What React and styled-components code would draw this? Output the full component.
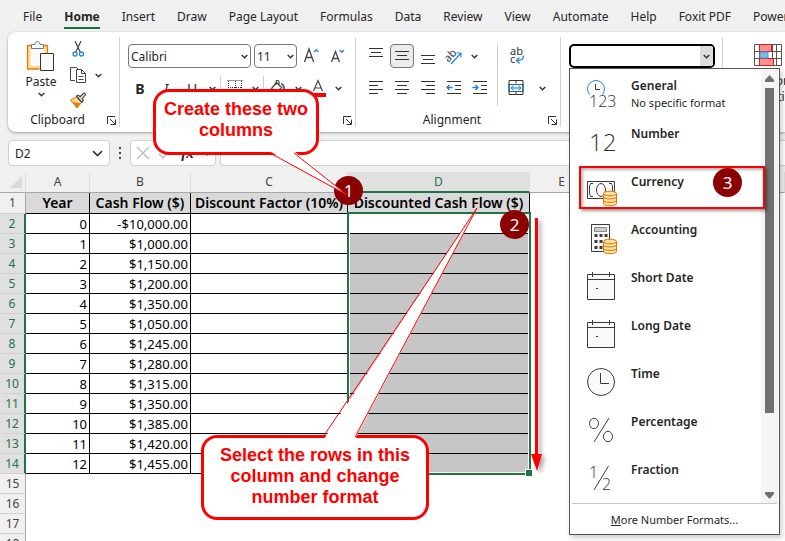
import React, { useState } from "react";
import styled, { createGlobalStyle } from "styled-components";

const GlobalStyle = createGlobalStyle`
  * {
    box-sizing: border-box;
  }
  body {
    margin: 0;
    background: #f0f0f0;
    color: #262626;
    font-family: "Noto Sans", "Open Sans", sans-serif;
    font-size: 12px;
  }
  button, input, select {
    font: inherit;
    color: inherit;
  }
`;

const Page = styled.div`
  position: relative;
  display: flex;
  flex-direction: column;
  height: 100vh;
  overflow: hidden;
`;

/* ribbon tabs */

const Tabs = styled.nav`
  display: flex;
  flex: none;
  gap: 22px;
  height: 32px;
  padding-left: 23px;
  overflow: hidden;
`;

const Tab = styled.button`
  flex: none;
  height: 29px;
  padding: 5px 0 0;
  border: 0;
  border-bottom: 2px solid ${(p) => (p.$active ? "#1b6e43" : "transparent")};
  background: none;
  font-weight: ${(p) => (p.$active ? 700 : 400)};
  white-space: nowrap;
`;

/* ribbon */

const Ribbon = styled.section`
  position: relative;
  z-index: 2;
  display: flex;
  flex: none;
  height: 100px;
  margin-left: 8px;
  padding: 5px 0;
  border-radius: 8px 0 0 8px;
  background: #fff;
  box-shadow: 0 1px 3px rgba(0, 0, 0, 0.35);
`;

const Group = styled.div`
  display: flex;
  flex: none;
  flex-direction: column;
  width: ${(p) => p.$width}px;
  border-right: 1px solid #d0d0d0;
`;

const GroupBody = styled.div`
  display: flex;
  flex: 1;
  padding: 7px 0 0 8px;
`;

const GroupFooter = styled.div`
  display: flex;
  align-items: center;
  height: 14px;
  padding-right: 3px;
  line-height: 14px;

  span {
    flex: 1;
    text-align: center;
  }
`;

const Launcher = styled.button`
  display: flex;
  padding: 0;
  border: 0;
  background: none;
`;

const Column = styled.div`
  display: flex;
  flex-direction: column;
  gap: ${(p) => p.$gap || 8}px;
`;

const Row = styled.div`
  display: flex;
  align-items: center;
  height: 24px;
  gap: 2px;
`;

const ToolButton = styled.button`
  display: flex;
  flex: none;
  align-items: center;
  justify-content: center;
  width: 24px;
  height: 24px;
  padding: 0;
  border: 1px solid ${(p) => (p.$active ? "#777" : "transparent")};
  border-radius: 4px;
  background: ${(p) => (p.$active ? "#ececec" : "none")};
  font-size: 14px;
`;

const DropButton = styled(ToolButton)`
  width: 12px;
`;

const Divider = styled.div`
  width: 1px;
  height: ${(p) => p.$height}px;
  background: #d0d0d0;
`;

const PasteButton = styled.button`
  display: flex;
  flex-direction: column;
  align-items: center;
  width: 50px;
  height: 70px;
  margin-top: -3px;
  padding: 0;
  border: 0;
  background: none;
  line-height: 18px;
`;

const ClipboardTools = styled(Column)`
  margin-top: -7px;
`;

const SelectBox = styled.label`
  position: relative;
  display: flex;
  flex: none;
  align-items: center;
  width: ${(p) => p.$width}px;
  height: 24px;
  margin-right: 1px;

  select {
    width: 100%;
    height: 100%;
    padding: 0 2px;
    border: 1px solid #777;
    border-radius: 4px;
    background: #fff;
    appearance: none;
  }

  svg {
    position: absolute;
    right: 3px;
    pointer-events: none;
  }
`;

const FormatBox = styled.div`
  position: relative;
  display: flex;
  width: 146px;
  height: 24px;
  border: 2px solid #000;
  border-radius: 5px;

  input {
    flex: 1;
    min-width: 0;
    padding: 0 4px;
    border: 0;
    background: none;
    outline: 0;
  }
`;

const FormatArrow = styled.button`
  display: flex;
  align-items: center;
  justify-content: center;
  width: 13px;
  padding: 0;
  border: 0;
  border-radius: 0 2px 2px 0;
  background: #ddd;
`;

const ConditionalButton = styled.button`
  display: flex;
  flex-direction: column;
  align-items: center;
  width: 74px;
  padding: 0;
  border: 0;
  background: none;
  line-height: 16px;

  svg {
    margin-bottom: 7px;
  }
`;

/* number format menu */

const Menu = styled.div`
  position: absolute;
  top: 22px;
  left: -2px;
  width: 211px;
  border: 1px solid #555;
  background: #fff;
  box-shadow: 2px 3px 5px rgba(0, 0, 0, 0.2);
`;

const MenuBody = styled.div`
  display: flex;
  padding: 1px 1px 0 0;
`;

const MenuList = styled.ul`
  flex: 1;
  margin: 0;
  padding: 0 0 1px;
  list-style: none;
`;

const MenuItem = styled.button`
  display: flex;
  gap: 12px;
  width: 100%;
  height: 48px;
  padding: 7px 0 0 17px;
  border: 0;
  background: none;
  line-height: 17px;
  text-align: left;

  strong,
  span {
    display: block;
    font-size: 12px;
    font-weight: 600;
    white-space: nowrap;
  }

  span {
    font-size: 11px;
    font-weight: 400;
  }
`;

const FormatSvg = styled.svg`
  flex: none;
  margin-top: 2px;

  text {
    fill: #333;
    stroke: none;
    font-family: "Open Sans", "Noto Sans", sans-serif;
    font-weight: 300;
  }
`;

const ScrollTrack = styled.div`
  display: flex;
  flex-direction: column;
  align-items: center;
  width: 17px;
  padding: 5px 0 4px;
  background: #f4f4f4;
`;

const ScrollThumb = styled.div`
  width: 9px;
  height: 325px;
  margin: 5px 0 auto;
  background: #707070;
`;

const MenuFooter = styled.button`
  display: block;
  width: calc(100% - 4px);
  height: 31px;
  margin: 0 2px;
  padding: 0;
  border: 0;
  border-top: 1px solid #c8c8c8;
  background: none;
  font-size: 11px;
  text-align: center;
`;

/* formula bar */

const FormulaBar = styled.div`
  display: flex;
  flex: none;
  align-items: center;
  height: 40px;
  padding: 2px 0 0 8px;
`;

const NameBox = styled.label`
  display: flex;
  align-items: center;
  width: 102px;
  height: 26px;
  padding: 0 6px;
  border: 1px solid #d0d0d0;
  border-radius: 4px;
  background: #fff;

  input {
    flex: 1;
    min-width: 0;
    padding: 0;
    border: 0;
    background: none;
  }
`;

const FormulaTools = styled.div`
  display: flex;
  align-items: center;
  justify-content: space-between;
  width: 86px;
  height: 26px;
  padding: 0 4px;
  border: 1px solid #d0d0d0;
  border-radius: 4px;
  background: #fff;

  em {
    font: italic bold 15px "Liberation Serif", serif;
  }
`;

const FormulaInput = styled.input`
  flex: 1;
  height: 26px;
  margin-left: 4px;
  border: 1px solid #d0d0d0;
  border-right: 0;
  border-radius: 4px 0 0 4px;
  background: #fff;
`;

const Dots = styled.svg`
  flex: none;
  margin: 0 8px;
`;

/* sheet */

const Sheet = styled.main`
  position: relative;
  flex: 1;
  min-height: 0;
  background: #fff;
`;

const Grid = styled.table`
  width: 100%;
  border-spacing: 0;
  table-layout: fixed;
  font-size: 13px;
  line-height: 16px;
`;

const ColHead = styled.th`
  height: 21px;
  padding: 0;
  border-right: 1px solid #dcdcdc;
  border-bottom: ${(p) => (p.$selected ? "2px solid #217346" : "1px solid #a6a6a6")};
  background: ${(p) => (p.$selected ? "#e0e0e0" : "#f0f0f0")};
  color: ${(p) => (p.$selected ? "#217346" : "#444")};
  font-size: 12px;
  font-weight: 400;
`;

const Corner = styled(ColHead)`
  svg {
    display: block;
    margin: 0 3px 0 auto;
  }
`;

const RowHead = styled.th`
  height: ${(p) => (p.$tall ? 21 : 20)}px;
  padding: 0;
  border-right: ${(p) => (p.$selected ? "2px solid #217346" : "1px solid #a6a6a6")};
  border-bottom: 1px solid #d0d0d0;
  background: ${(p) => (p.$selected ? "#e0e0e0" : "#f0f0f0")};
  color: ${(p) => (p.$selected ? "#217346" : "#444")};
  font-size: 12px;
  font-weight: 400;
`;

const TitleCell = styled.th`
  padding: 0;
  border-right: 1px solid #000;
  border-bottom: 1px solid #000;
  background: #d9d9d9;
  color: #000;
  font-size: 14px;
  font-weight: 600;
  white-space: nowrap;
`;

const Cell = styled.td`
  padding: 0 2px 0 0;
  border-right: 1px solid #000;
  border-bottom: 1px solid #000;
  background: ${(p) => (p.$shaded ? "#c6c6c6" : "#fff")};
  color: #000;
  text-align: right;
`;

const Selection = styled.div`
  position: absolute;
  top: 40px;
  left: 347px;
  width: 184px;
  height: 263px;
  border: 2px solid #217346;
  box-shadow: inset 0 0 0 1px #fff;

  &::after {
    content: "";
    position: absolute;
    right: -3px;
    bottom: -3px;
    width: 6px;
    height: 6px;
    border: 1px solid #fff;
    border-width: 1px 0 0 1px;
    background: #217346;
  }
`;

/* annotations drawn over the window */

const Annotations = styled.div`
  position: absolute;
  inset: 0;
  z-index: 3;
  pointer-events: none;
`;

const Callout = styled.p`
  position: absolute;
  top: ${(p) => p.$top}px;
  left: ${(p) => p.$left}px;
  width: ${(p) => p.$width}px;
  margin: 0;
  padding: 7px 0 ${(p) => p.$bottom}px;
  border: 3px solid #f00;
  border-radius: 16px;
  background: #fff;
  color: #f00;
  font: bold 18px/21px "Liberation Sans", Arial, sans-serif;
  text-align: center;
  white-space: pre-line;
`;

const Badge = styled.span`
  position: absolute;
  top: ${(p) => p.$top}px;
  left: ${(p) => p.$left}px;
  width: 29px;
  height: 29px;
  border-radius: 50%;
  background: #8b0000;
  color: #fff;
  font: 17px/29px "Noto Sans", sans-serif;
  text-align: center;
`;

const Highlight = styled.div`
  position: absolute;
  top: 166px;
  left: 579px;
  width: 186px;
  height: 43px;
  border: 2px solid #f00;
  box-shadow: 2px 2px 3px rgba(0, 0, 0, 0.4), inset 2px 2px 3px rgba(0, 0, 0, 0.3);
`;

const Pointers = styled.svg`
  position: absolute;
  top: 0;
  left: 0;
`;

/* icons */

const Chevron = ({ size = 7 }) => (
  <svg width={size} height={size} viewBox="0 0 7 7" fill="none" stroke="#333" strokeWidth={size > 8 ? 1 : 1.4}>
    <path d="M.7 2l2.8 2.8L6.3 2" />
  </svg>
);

const LaunchIcon = () => (
  <svg width="9" height="9" viewBox="0 0 9 9" fill="none" stroke="#333">
    <path d="M.5 8V.5H8M3 3l5 5M8.5 3.500v5h-5" />
  </svg>
);

const PasteIcon = () => (
  <svg width="30" height="32" viewBox="0 0 30 32" fill="none">
    <path d="M3 6.500h17v20H3z" fill="#fafafa" stroke="#ffd88c" strokeWidth="3" />
    <path d="M8 4.500H1.500v23.500h12M16 4.500h5.500V12" stroke="#e07b18" strokeWidth="1.300" />
    <path d="M5.500 7.500v-4H9c0-4 5-4 5 0h3.500v4z" fill="#fafafa" stroke="#777" />
    <path d="M14.500 12.500h13v17h-13z" fill="#fafafa" stroke="#333" />
  </svg>
);

const CutIcon = () => (
  <svg width="16" height="18" viewBox="0 0 16 18" fill="none">
    <path d="M5 1l5.400 11.500M11 1L5.600 12.500" stroke="#444" strokeWidth="1.200" />
    <circle cx="5" cy="14" r="2" stroke="#2b88d8" strokeWidth="1.300" />
    <circle cx="11.500" cy="14" r="2" stroke="#2b88d8" strokeWidth="1.300" />
  </svg>
);

const CopyIcon = () => (
  <svg width="18" height="18" viewBox="0 0 18 18" fill="none" stroke="#444">
    <path d="M6 14.500H1.500v-13h6l2 2" />
    <path d="M7.500 3.500h5l4 4v9h-9zM12.500 3.500v4h4M9.500 10.500h5M9.500 13.500h5" fill="#fff" />
  </svg>
);

const BrushIcon = () => (
  <svg width="18" height="18" viewBox="0 0 18 18" fill="none">
    <path d="M7 5L1.500 8 8 16l4.500-5.500z" fill="#ffd88c" stroke="#e07b18" />
    <path d="M4 10l8 1.500-4.500 4.500z" fill="#e8761b" />
    <path d="M7.500 4l2-.8 1.600 1.600L14.500 1.500c1.300-.8 2.500.6 1.600 1.700L13 6.700l1.300 1.500-1.500 2z" fill="#fff" stroke="#444" strokeWidth="1.200" />
  </svg>
);

const GrowIcon = ({ shrink }) => (
  <svg width="18" height="18" viewBox="0 0 18 18" fill="none" stroke="#444" strokeWidth="1.300">
    {shrink ? <path d="M2.500 15L6.500 4.500 10.500 15M4 11.500h5" /> : <path d="M1.500 15L6 2l4.700 13M3 10.500h6" />}
    <path d={shrink ? "M10.500 3l2.300 2.300L15 3" : "M11 5l2.300-2.300L15.500 5"} stroke="#2b88d8" strokeWidth="1.400" />
  </svg>
);

const BorderIcon = () => (
  <svg width="16" height="16" viewBox="0 0 16 16" fill="none" stroke="#333" strokeDasharray="1 1">
    <path d="M.5 .500h15M1.500 1v12M8.500 1v12M14.500 1v12M1 7.500h14M1 14.500h14" />
  </svg>
);

const FillIcon = () => (
  <svg width="16" height="16" viewBox="0 0 16 16" fill="none" stroke="#444" strokeWidth="1.200">
    <path d="M6.500 2.500l5 5-5.500 5.500L1.500 8.500zM6 5V2c0-2 3-2 3 0v4" />
    <path d="M11 4c2 0 3 2 3 6" stroke="#2b6ca3" strokeWidth="2" />
  </svg>
);

const FontColorIcon = () => (
  <svg width="18" height="20" viewBox="0 0 18 20" fill="none">
    <path d="M4.500 13L9 2.500 13.500 13M6 10h6" stroke="#444" strokeWidth="1.200" />
    <path d="M1 15h16v4H1z" fill="#f00" />
  </svg>
);

const lineShapes = {
  top: "M1 3.500h14M3 7.500h10M1 11.500h14",
  middle: "M1 3.500h14M3 7.500h10M1 11.500h14",
  bottom: "M1 7.500h14M3 11.500h10M1 15.500h14",
  left: "M1 1.500h14M1 5.500h9M1 9.500h14M1 13.500h9",
  center: "M1 1.500h14M3 5.500h10M1 9.500h14M3 13.500h10",
  right: "M1 1.500h14M6 5.500h9M1 9.500h14M6 13.500h9",
  indent: "M1 1.500h14M9 5.500h6M9 9.500h6M1 13.500h14",
};

const LinesIcon = ({ shape, arrow }) => (
  <svg
    width="16"
    height={shape === "top" ? 22 : 16}
    viewBox={shape === "top" ? "0 0 16 22" : "0 0 16 16"}
    fill="none"
    stroke="#333"
  >
    <path d={lineShapes[shape]} />
    {arrow && (
      <path
        d={arrow === "out" ? "M6.500 7.500H1M3.500 5L1 7.500 3.500 10" : "M.5 7.500H6M3.500 5L6 7.500 3.500 10"}
        stroke="#1e7fd0"
        strokeWidth="1.300"
      />
    )}
  </svg>
);

const OrientationIcon = () => (
  <svg width="18" height="18" viewBox="0 0 18 18" fill="none">
    <text x="0" y="12" fontSize="11" fill="#333" transform="rotate(-45 6 10)">ab</text>
    <path d="M6 17L16 6M11.500 6H16v4.500" stroke="#2b88d8" strokeWidth="1.200" />
  </svg>
);

const WrapIcon = () => (
  <svg width="18" height="20" viewBox="0 0 18 20" fill="none">
    <text x="3" y="9" fontSize="11" fill="#333">ab</text>
    <text x="3" y="17" fontSize="11" fill="#333">c</text>
    <path d="M16 9.500c1 4-2 5-6 5M12.500 11.500l-3 3 3 3" stroke="#2b88d8" strokeWidth="1.400" />
  </svg>
);

const MergeIcon = () => (
  <svg width="16" height="16" viewBox="0 0 16 16" fill="none" stroke="#333">
    <path d="M1 4.500h14v7H1z" stroke="#2b6ca3" fill="#eaf4fc" />
    <path d="M1 .500h14v14H1zM8 .5v3M8 12v3" />
    <path d="M3 8h10M5.500 5.800L3 8l2.500 2.200M10.500 5.800L13 8l-2.500 2.200" stroke="#1e7fd0" />
  </svg>
);

const ConditionalIcon = () => (
  <svg width="28" height="22" viewBox="0 0 28 22" fill="none">
    <path d="M.5.500h27v21H.5zM.5 7.500h27M.5 14.500h27M5.500 0v22M18.500 0v22M22.500 0v22" stroke="#555" />
    <path d="M5.500.500h12v7h-12zM5.500 14.500h14v7h-14z" fill="#ff9090" stroke="#d62020" />
    <path d="M6 8h8v6H6z" fill="#7cb9e8" stroke="#4a94cf" />
  </svg>
);

const Coins = () => (
  <g fill="#ffe0a0" stroke="#d9730d">
    <path d="M16.500 18.500v10c0 3 13 3 13 0v-10" />
    <path d="M16.500 22c0 2.500 13 2.500 13 0M16.500 25.500c0 2.500 13 2.500 13 0" fill="none" />
    <ellipse cx="23" cy="18.500" rx="6.500" ry="2.300" />
  </g>
);

const Calendar = () => (
  <path d="M.5 3.500h27v25H.5zM.5 8.500h27M5.500 1v5M22.500 1v5M9 17.500h2" fill="#fafafa" />
);

const formatIcons = {
  General: (
    <>
      <path d="M2.500 15.500A8.500 8.500 0 1 1 15.500 15.500" stroke="#2b88d8" fill="#fafafa" />
      <path d="M8.500 5v5.500H13" />
      <text x="2" y="28" fontSize="16">123</text>
    </>
  ),
  Number: <text x="2" y="24" fontSize="24">12</text>,
  Currency: (
    <>
      <path d="M.5 6.500h27v17H.5z" fill="#fafafa" />
      <path d="M6 8.500H3.500C3.500 10 3 10.500 2.500 10.500v9c.5 0 1 .5 1 2H6M22 8.500h2.500c0 1.500.5 2 1 2v9" />
      <ellipse cx="14" cy="15" rx="4.500" ry="6.500" />
      <Coins />
    </>
  ),
  Accounting: (
    <>
      <path d="M4.500 1.500h18v27h-18z" fill="#fafafa" />
      <path d="M7.500 4.500h12v4h-12z" fill="#ccc" stroke="#888" />
      <path d="M7.500 12.500h3m2 0h3m2 0h3M7.500 18.500h3m2 0h3m2 0h3M7.500 24.500h3m2 0h3" strokeWidth="3" />
      <Coins />
    </>
  ),
  "Short Date": <Calendar />,
  "Long Date": <Calendar />,
  Time: (
    <>
      <circle cx="14" cy="15" r="13.500" fill="#fafafa" />
      <path d="M13.500 6v10.500H22" />
    </>
  ),
  Percentage: (
    <>
      <ellipse cx="7" cy="8.500" rx="4.500" ry="5.200" />
      <ellipse cx="21" cy="21.500" rx="4.500" ry="5.200" />
      <path d="M22 3L7 27" />
    </>
  ),
  Fraction: (
    <>
      <text x="2" y="15" fontSize="16">1</text>
      <text x="15" y="27" fontSize="16">2</text>
      <path d="M21.500 3L7 27" />
    </>
  ),
};

const FormatIcon = ({ name }) => (
  <FormatSvg width="32" height="32" viewBox="0 0 32 32" fill="none" stroke="#3a3a3a">
    {formatIcons[name]}
  </FormatSvg>
);

const tabs = [
  "File", "Home", "Insert", "Draw", "Page Layout", "Formulas", "Data",
  "Review", "View", "Automate", "Help", "Foxit PDF", "Power Pivot",
];

const flows = [
  "-$10,000.00", "$1,000.00", "$1,150.00", "$1,200.00", "$1,350.00",
  "$1,050.00", "$1,245.00", "$1,280.00", "$1,315.00", "$1,350.00",
  "$1,385.00", "$1,420.00", "$1,455.00",
];

const titles = ["Year", "Cash Flow ($)", "Discount Factor (10%)", "Discounted Cash Flow ($)"];

const GroupLabel = ({ children, settings }) => (
  <GroupFooter>
    <span>{children}</span>
    <Launcher aria-label={settings}>
      <LaunchIcon />
    </Launcher>
  </GroupFooter>
);

const ClipboardGroup = () => (
  <Group $width={112}>
    <GroupBody>
      <PasteButton>
        <PasteIcon />
        <span>Paste</span>
        <Chevron />
      </PasteButton>
      <ClipboardTools $gap={2}>
        <Row>
          <ToolButton aria-label="Cut"><CutIcon /></ToolButton>
        </Row>
        <Row>
          <ToolButton aria-label="Copy"><CopyIcon /></ToolButton>
          <DropButton aria-label="Copy options"><Chevron /></DropButton>
        </Row>
        <Row>
          <ToolButton aria-label="Format painter"><BrushIcon /></ToolButton>
        </Row>
      </ClipboardTools>
    </GroupBody>
    <GroupLabel settings="Clipboard settings">Clipboard</GroupLabel>
  </Group>
);

const FontGroup = () => (
  <Group $width={236}>
    <GroupBody>
      <Column>
        <Row>
          <SelectBox $width={123}>
            <select aria-label="Font">
              <option>Calibri</option>
            </select>
            <Chevron />
          </SelectBox>
          <SelectBox $width={43}>
            <select aria-label="Font size">
              <option>11</option>
            </select>
            <Chevron />
          </SelectBox>
          <ToolButton aria-label="Increase font size"><GrowIcon /></ToolButton>
          <ToolButton aria-label="Decrease font size"><GrowIcon shrink /></ToolButton>
        </Row>
        <Row>
          <ToolButton aria-label="Bold"><b>B</b></ToolButton>
          <ToolButton aria-label="Italic"><i>I</i></ToolButton>
          <ToolButton aria-label="Underline"><u>U</u></ToolButton>
          <DropButton aria-label="Underline options"><Chevron /></DropButton>
          <Divider $height={24} />
          <ToolButton aria-label="Borders"><BorderIcon /></ToolButton>
          <DropButton aria-label="Border options"><Chevron /></DropButton>
          <Divider $height={24} />
          <ToolButton aria-label="Fill color"><FillIcon /></ToolButton>
          <DropButton aria-label="Fill options"><Chevron /></DropButton>
          <ToolButton aria-label="Font color"><FontColorIcon /></ToolButton>
          <DropButton aria-label="Font color options"><Chevron /></DropButton>
        </Row>
      </Column>
    </GroupBody>
    <GroupLabel settings="Font settings" />
  </Group>
);

const AlignSplit = styled(Divider)`
  margin: 0 6px 0 5px;
`;

const AlignmentGroup = () => (
  <Group $width={205}>
    <GroupBody>
      <Column>
        <Row>
          <ToolButton aria-label="Top align"><LinesIcon shape="top" /></ToolButton>
          <ToolButton aria-label="Middle align" $active><LinesIcon shape="middle" /></ToolButton>
          <ToolButton aria-label="Bottom align"><LinesIcon shape="bottom" /></ToolButton>
          <ToolButton aria-label="Orientation"><OrientationIcon /></ToolButton>
          <DropButton aria-label="Orientation options"><Chevron /></DropButton>
        </Row>
        <Row>
          <ToolButton aria-label="Align left"><LinesIcon shape="left" /></ToolButton>
          <ToolButton aria-label="Center"><LinesIcon shape="center" /></ToolButton>
          <ToolButton aria-label="Align right"><LinesIcon shape="right" /></ToolButton>
          <ToolButton aria-label="Decrease indent"><LinesIcon shape="indent" arrow="out" /></ToolButton>
          <ToolButton aria-label="Increase indent"><LinesIcon shape="indent" arrow="in" /></ToolButton>
        </Row>
      </Column>
      <AlignSplit $height={62} />
      <Column>
        <Row>
          <ToolButton aria-label="Wrap text"><WrapIcon /></ToolButton>
        </Row>
        <Row>
          <ToolButton aria-label="Merge and center"><MergeIcon /></ToolButton>
          <ToolButton aria-label="Merge options"><Chevron /></ToolButton>
        </Row>
      </Column>
    </GroupBody>
    <GroupLabel settings="Alignment settings">Alignment</GroupLabel>
  </Group>
);

const FormatMenu = ({ onPick }) => (
  <Menu>
    <MenuBody>
      <MenuList>
        {Object.keys(formatIcons).map((name) => (
          <li key={name}>
            <MenuItem onClick={() => onPick(name)}>
              <FormatIcon name={name} />
              <div>
                <strong>{name}</strong>
                {name === "General" && <span>No specific format</span>}
              </div>
            </MenuItem>
          </li>
        ))}
      </MenuList>
      <ScrollTrack>
        <svg width="9" height="8" viewBox="0 0 9 8" fill="#707070">
          <path d="M4.500 0L9 5v2H0V5z" />
        </svg>
        <ScrollThumb />
        <svg width="9" height="8" viewBox="0 0 9 8" fill="#707070">
          <path d="M4.500 8L9 3V1H0v2z" />
        </svg>
      </ScrollTrack>
    </MenuBody>
    <MenuFooter><u>M</u>ore Number Formats...</MenuFooter>
  </Menu>
);

const NumberGroup = () => {
  const [open, setOpen] = useState(true);
  const [format, setFormat] = useState("");

  const pick = (name) => {
    setFormat(name);
    setOpen(false);
  };

  return (
    <Group $width={162}>
      <GroupBody>
        <FormatBox>
          <input
            aria-label="Number format"
            value={format}
            onChange={(e) => setFormat(e.target.value)}
          />
          <FormatArrow aria-label="Number formats" onClick={() => setOpen(!open)}>
            <Chevron />
          </FormatArrow>
          {open && <FormatMenu onPick={pick} />}
        </FormatBox>
      </GroupBody>
    </Group>
  );
};

const SheetGrid = () => (
  <Sheet>
    <Grid>
      <colgroup>
        {[26, 64, 101, 157, 182, 64, 64, 64].map((width, i) => (
          <col key={i} width={width} />
        ))}
        <col />
      </colgroup>
      <thead>
        <tr>
          <Corner aria-label="Select all">
            <svg width="12" height="12" viewBox="0 0 12 12" fill="#dadada">
              <path d="M12 0v12H0z" />
            </svg>
          </Corner>
          {"ABCDEFGH".split("").map((letter) => (
            <ColHead key={letter} $selected={letter === "D"}>{letter}</ColHead>
          ))}
        </tr>
      </thead>
      <tbody>
        <tr>
          <RowHead $tall>1</RowHead>
          {titles.map((title) => (
            <TitleCell key={title}>{title}</TitleCell>
          ))}
        </tr>
        {flows.map((flow, year) => (
          <tr key={year}>
            <RowHead $selected>{year + 2}</RowHead>
            <Cell>{year}</Cell>
            <Cell>{flow}</Cell>
            <Cell />
            <Cell $shaded={year > 0} />
          </tr>
        ))}
        {[15, 16, 17, 18].map((row) => (
          <tr key={row}>
            <RowHead>{row}</RowHead>
          </tr>
        ))}
      </tbody>
    </Grid>
    <Selection />
  </Sheet>
);

const App = () => (
  <Page>
    <GlobalStyle />
    <Tabs>
      {tabs.map((name) => (
        <Tab key={name} $active={name === "Home"}>{name}</Tab>
      ))}
    </Tabs>
    <Ribbon>
      <ClipboardGroup />
      <FontGroup />
      <AlignmentGroup />
      <NumberGroup />
      <GroupBody>
        <ConditionalButton>
          <ConditionalIcon />
          <span>Conditional Formatting</span>
        </ConditionalButton>
      </GroupBody>
    </Ribbon>
    <FormulaBar>
      <NameBox>
        <input aria-label="Name box" defaultValue="D2" />
        <Chevron size={11} />
      </NameBox>
      <Dots width="4" height="14" viewBox="0 0 4 14" fill="#444">
        <path d="M1 1h2v2H1zM1 6h2v2H1zM1 11h2v2H1z" />
      </Dots>
      <FormulaTools>
        <svg width="36" height="14" viewBox="0 0 36 14" fill="none" stroke="#bbb" strokeWidth="1.300">
          <path d="M2 1l12 12M14 1L2 13M24 8l4 4 8-9" />
        </svg>
        <em>fx</em>
        <Chevron />
      </FormulaTools>
      <FormulaInput aria-label="Formula" />
    </FormulaBar>
    <SheetGrid />
    <Annotations>
      <Badge $top={176} $left={334}>1</Badge>
      <Callout $top={89} $left={153} $width={166} $bottom={11}>
        {"Create these two\ncolumns"}
      </Callout>
      <Callout $top={435} $left={201} $width={228} $bottom={9}>
        {"Select the rows in this\ncolumn and change\nnumber format"}
      </Callout>
      <Pointers width="785" height="541" viewBox="0 0 785 541" fill="none">
        <path d="M271 152L347 195 295 152z" fill="#fff" />
        <path d="M270 153L347 195 294 153" stroke="#f00" />
        <path d="M324 439L477 208 355 439z" fill="#fff" />
        <path d="M323 437L477 208 355 437" stroke="#f00" />
        <g fill="#f00" filter="drop-shadow(3px 3px 2px rgba(0,0,0,.35))">
          <path d="M535 218h3v236h4l-5 17-6-17h4z" />
        </g>
      </Pointers>
      <Badge $top={210} $left={500}>2</Badge>
      <Highlight />
      <Badge $top={168} $left={713}>3</Badge>
    </Annotations>
  </Page>
);

export default App;
